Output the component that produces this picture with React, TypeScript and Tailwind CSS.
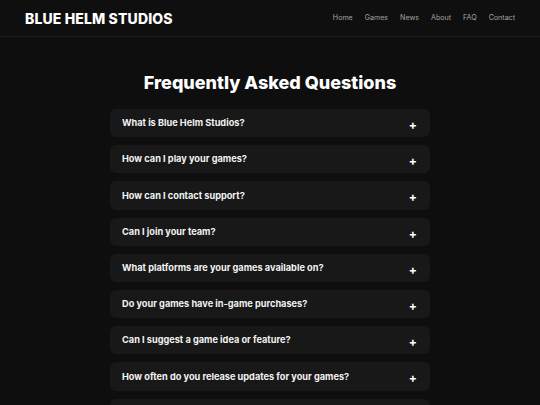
const navLinks = ["Home", "Games", "News", "About", "FAQ", "Contact"];

const questions = [
  "What is Blue Helm Studios?",
  "How can I play your games?",
  "How can I contact support?",
  "Can I join your team?",
  "What platforms are your games available on?",
  "Do your games have in-game purchases?",
  "Can I suggest a game idea or feature?",
  "How often do you release updates for your games?",
  "Do you offer beta testing opportunities?",
  "Where can I follow your latest news?",
];

function FaqItem({ question }: { question: string }) {
  return (
    <div className="flex h-[28.2px] shrink-0 items-center justify-between rounded-md bg-[#181818] pl-[12px] pr-[13px]">
      <span className="text-[9.2px] font-bold text-[#f2f2f2]">{question}</span>
      <span className="mt-[4px] text-[12px] font-bold leading-none text-white">+</span>
    </div>
  );
}

export default function App() {
  return (
    <div
      className="h-screen overflow-hidden bg-[#0e0e0e] text-white"
      style={{ fontFamily: "Inter, 'Noto Sans', sans-serif" }}
    >
      <header className="flex h-[37px] items-center justify-between border-b border-[#1c1c1c] bg-[#0f0f0f] pl-[25px] pr-[25px]">
        <div className="text-[14px] font-extrabold tracking-[0.01em] text-white">
          BLUE HELM STUDIOS
        </div>
        <nav className="flex items-center gap-[12px] text-[7.1px] text-[#a3a3a3]">
          {navLinks.map((link) => (
            <a key={link} href="#" className="hover:text-white">
              {link}
            </a>
          ))}
        </nav>
      </header>

      <main className="mx-auto w-[320px] pt-[33px]">
        <h1 className="mb-[13px] text-center text-[18px] font-extrabold leading-[26px] text-white">
          Frequently Asked Questions
        </h1>
        <div className="flex flex-col gap-[8px]">
          {questions.map((q) => (
            <FaqItem key={q} question={q} />
          ))}
        </div>
      </main>
    </div>
  );
}
